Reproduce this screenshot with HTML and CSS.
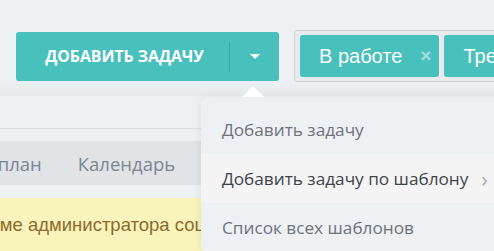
FILE: index.html
```html
<!DOCTYPE html>
<html lang="ru">
<head>
    <meta charset="UTF-8">
    <title>Задачи</title>
    <link rel="stylesheet" href="styles.css">
</head>
<body class="page">
<header class="toolbar">
    <div class="btn-group">
        <button class="btn-add">Добавить задачу</button>
        <button class="btn-toggle"><span class="caret"></span></button>
        <ul class="dropdown">
            <li>Добавить задачу</li>
            <li class="active">Добавить задачу по шаблону <span class="chevron">&rsaquo;</span></li>
            <li>Список всех шаблонов</li>
        </ul>
    </div>
    <div class="filter">
        <span class="tag">В работе <span class="tag-close">&times;</span></span>
        <span class="tag">Требует внимания <span class="tag-close">&times;</span></span>
    </div>
</header>

<div class="divider"></div>

<nav class="tabs">
    <span class="tab">Медиаплан</span>
    <span class="tab">Календарь</span>
    <span class="tab">Отчёты</span>
</nav>

<div class="alert">
    <span class="alert-text">Вы работаете в режиме администратора соцсети</span>
</div>
</body>
</html>
```

FILE: styles.css
```css
body {
    margin: 0;
}

.page {
    background: #eef1f4;
    font-family: "Open Sans", "Liberation Sans", sans-serif;
    overflow: hidden;
    height: 251px;
}

.toolbar {
    display: flex;
    align-items: center;
    gap: 15px;
    padding: 30px 0 14px 16px;
    background: linear-gradient(#eef1f4 84%, #e6e9ec);
    white-space: nowrap;
}

.btn-group {
    position: relative;
    display: flex;
    flex: none;
    height: 49px;
    background: #48c0bb;
    border-radius: 3px;
}

.btn-add,
.btn-toggle {
    border: 0;
    background: transparent;
    color: #fff;
    font-family: "Open Sans", sans-serif;
    cursor: pointer;
}

.btn-add {
    width: 213px;
    padding: 0 0 0 4px;
    font-size: 15.8px;
    font-weight: 700;
    text-transform: uppercase;
}

.btn-toggle {
    width: 50px;
    display: flex;
    align-items: center;
    justify-content: center;
    border-left: 1px solid #3aaaa6;
    margin: 10px 0 9px;
    padding: 0 0 0 1px;
}

.caret {
    width: 0;
    height: 0;
    border-left: 5px solid transparent;
    border-right: 5px solid transparent;
    border-top: 5px solid #fff;
}

.dropdown {
    position: absolute;
    top: 65px;
    left: 185px;
    width: 320px;
    margin: 0;
    padding: 8px 0 0;
    list-style: none;
    background: #eef1f4;
    border-radius: 7px;
    box-shadow: 0 2px 12px rgba(0, 0, 0, 0.07);
    font-size: 17.2px;
    color: #6c737a;
    z-index: 2;
}

.dropdown:before {
    content: "";
    position: absolute;
    top: -11px;
    left: 41px;
    border-left: 11px solid transparent;
    border-right: 11px solid transparent;
    border-bottom: 11px solid #fff;
}

.dropdown li {
    display: flex;
    align-items: center;
    height: 49px;
    padding: 0 21px;
}

.dropdown li.active {
    background: #f4f4f5;
    color: #3e434a;
}

.chevron {
    margin-left: 13px;
    font-size: 22px;
    color: #a9adb1;
    line-height: 1;
}

.filter {
    display: flex;
    gap: 5px;
    height: 42px;
    padding: 4px 5px;
    background: #e8ebee;
    border: 1px solid #cfd3d7;
    border-radius: 3px;
}

.tag {
    display: flex;
    align-items: center;
    padding: 0 8px 0 19px;
    background: #48c0bb;
    border-radius: 3px;
    color: #fff;
    font-family: "Liberation Sans", Arial, sans-serif;
    font-size: 20px;
}

.tag-close {
    margin-left: 18px;
    font-size: 19px;
    font-weight: 700;
    color: #a6dedb;
}

.divider {
    margin-top: 32px;
    height: 1px;
    background: #d9dde1;
}

.tabs {
    display: flex;
    gap: 36px;
    height: 44px;
    align-items: center;
    margin: 12px 0 0 -62px;
    background: #e1e4e7;
    color: #7b858f;
    font-size: 18.5px;
    white-space: nowrap;
}

.alert {
    margin-top: 13px;
    height: 60px;
    padding: 16px 0 0 0;
    background: #f8f4bb;
    color: #8f6a2c;
    font-family: "Liberation Sans", Arial, sans-serif;
    font-size: 18.5px;
    white-space: nowrap;
    box-sizing: border-box;
}

.alert-text {
    display: block;
    margin-left: -182px;
}
```
